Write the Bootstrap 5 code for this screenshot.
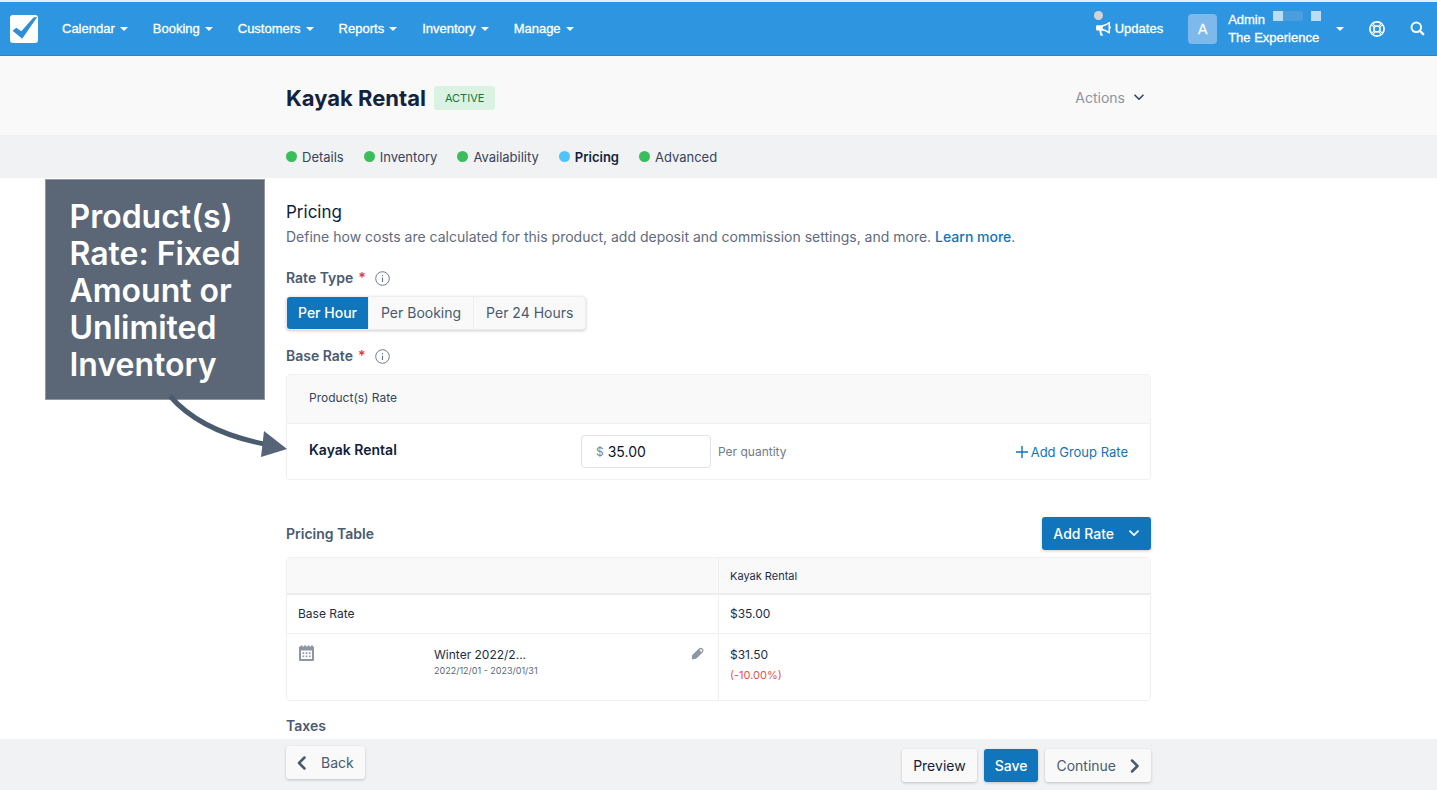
<!DOCTYPE html>
<html lang="en">
<head>
<meta charset="utf-8">
<meta name="viewport" content="width=device-width, initial-scale=1">
<title>Kayak Rental – Pricing</title>
<link href="https://cdn.jsdelivr.net/npm/bootstrap@5.3.0/dist/css/bootstrap.min.css" rel="stylesheet">
<style>
  :root { --ink:#0f1f3d; --slate:#4a5a70; --line:#eff0f2; --brand:#1175bb; --bar:#2e96e0; --pale:#f9f9f9; --mist:#f1f2f4; }
  body { font-family: Inter, "Liberation Sans", sans-serif; font-size: 14px; line-height: 20px; color: var(--ink); background: #fff; }
  a { text-decoration: none; }
  button { font-family: inherit; }
  svg { display: block; flex: none; }
  .wrap { width: 100%; max-width: 865px; margin-inline: auto; }

  .topbar { background: var(--bar); border-top: 2px solid #e4eef6; border-bottom: 1px solid #2785c9; height: 56px; padding: 0 12px 0 10px; font-family: "Liberation Sans", Arial, sans-serif; font-size: 13px; -webkit-text-stroke: .3px #fff; }
  .topbar a, .topbar button { color: #fff; }
  .topbar .menu { gap: 25px; margin-left: 24px; }
  .menu button { gap: 5px; }
  .plain { background: none; border: 0; padding: 0; }
  .tri { display: inline-block; border: 4px solid transparent; border-top-color: #fff; border-bottom: 0; }
  .updates { position: relative; gap: 4px; margin-right: 25px; }
  .dot-note { position: absolute; left: -2px; top: -8px; width: 9px; height: 9px; border-radius: 50%; background: #d3d3d6; }
  .avatar { width: 29px; height: 30px; border-radius: 4px; background: #7db9ea; font-size: 14px; }
  .account { gap: 11px; line-height: 18px; text-align: left; }
  .tool { margin-left: 25px; }
  .px { width: 10px; height: 10px; background: #bcdcf4; }
  .px.mid { width: 20px; background: #4b9edd; }

  .head { background: #f9f9f9; height: 79px; padding-top: 4px; }
  .head h1 { font-size: 22px; line-height: 28px; font-weight: 700; margin: 0; color: #13233f; }
  .tag { background: #daf2e1; color: #18763a; font-size: 11px; line-height: 24px; padding: 0 11px; border-radius: 3px; }
  .actions { color: #8b94a3; padding-right: 7px; gap: 9px; }
  .steps { background: var(--mist); height: 43px; font-size: 13px; }
  .steps ul { gap: 20px; }
  .steps a { color: #35445c; gap: 5px; }
  .steps a.now { color: var(--ink); font-weight: 600; }
  .bead { width: 11px; height: 11px; border-radius: 50%; background: #3bbd5b; }
  .now .bead { background: #4fc3fb; }

  .sheet { position: relative; padding-top: 22px; }
  h2 { font-size: 17px; line-height: 24px; font-weight: 400; margin: 0 0 3px; }
  .intro { color: #5f6b7c; margin: 0 0 21px; line-height: 20px; }
  .intro a { color: var(--brand); font-weight: 500; }
  .label-row { font-weight: 600; color: var(--slate); gap: 5px; line-height: 20px; }
  .label-row b { color: #e53935; font-weight: 600; }
  .label-row svg { margin-left: 4px; }
  .seg { margin: 8px 0 16px; height: 34px; border: 1px solid #ededef; border-radius: 4px; background: var(--pale); box-shadow: 0 1px 3px #0003; overflow: hidden; }
  .seg label { padding: 0 12px; color: var(--slate); cursor: pointer; border-left: 1px solid #ededef; line-height: 32px; }
  .seg input:checked + label { background: var(--brand); color: #fff; font-weight: 500; padding: 0 11px; border: 0; }

  .panel { border: 1px solid var(--line); border-radius: 4px; margin-top: 8px; margin-bottom: 37px; }
  .panel-head { background: var(--pale); border-bottom: 1px solid var(--line); height: 49px; padding: 0 22px; line-height: 46px; font-size: 12px; color: #35445c; }
  .panel-body { height: 55px; padding: 0 22px; }
  .product { flex: 0 0 272px; font-weight: 600; padding-bottom: 4px; }
  .money { width: 130px; height: 33px; border: 1px solid #dfe1e4; border-radius: 4px; padding: 0 14px; gap: 4px; margin-right: 7px; }
  .money span { font-size: 12px; color: #7b8593; }
  .money input { border: 0; outline: 0; padding: 0; width: 80px; color: #0b1428; background: none; }
  .hint { font-size: 12px; color: #6f7a89; }
  .add-group { color: var(--brand); font-size: 13px; gap: 3px; }

  .act { height: 33px; border-radius: 3px; border: 0; background: var(--pale); color: var(--slate); padding: 0 11px; box-shadow: 0 1px 3px #0003; font-size: 14px; white-space: nowrap; gap: 10px; }
  .act.main { background: var(--brand); color: #fff; font-weight: 500; gap: 14px; }
  .act.dark { color: var(--ink); }
  h3 { font-size: 14px; line-height: 20px; font-weight: 600; color: var(--slate); margin: 0; }
  .rates { border: 1px solid var(--line); border-radius: 4px; margin: 7px 0 15px; }
  .rates table { width: 100%; table-layout: fixed; font-size: 12px; color: #1e2d48; }
  .rates th, .rates td { padding: 0 11px; font-weight: 400; }
  .rates tr > :last-child { border-left: 1px solid var(--line); }
  .rates thead th { background: var(--pale); height: 36px; font-size: 11px; border-bottom: 2px solid #ecedf0; }
  .rates tbody tr:first-child > * { height: 39px; border-bottom: 1px solid var(--line); }
  .rates tbody tr:last-child > * { height: 67px; vertical-align: top; padding-top: 11px; }
  .season { width: 106px; margin-left: 119px; line-height: 20px; }
  .season small { display: block; font-size: 9px; line-height: 12px; color: #5b677a; white-space: nowrap; }
  .pencil { margin-right: 3px; padding-top: 2px; }
  .off { color: #e2574f; font-size: 11px; }

  .dock { background: var(--mist); height: 51px; bottom: 0; z-index: 5; }
  .dock .wrap { padding-top: 7px; }
  .dock .btn-set { gap: 7px; padding-top: 3px; }

  .callout { position: absolute; left: calc(50% - 674px); top: 1px; width: 220px; height: 221px; background: #5b6777; border: 1px solid #8f98a4; padding: 18px 0 0 24px; font-size: 32px; line-height: 37px; font-weight: 600; color: #fff; white-space: nowrap; }
  .arrow { position: absolute; left: 120px; top: 212px; }
</style>
</head>
<body class="d-flex flex-column min-vh-100">
<header class="topbar d-flex align-items-center">
  <a href="#" aria-label="Home"><svg width="28" height="28" viewBox="0 0 28 28"><rect width="28" height="28" rx="3" fill="#fff"/><path d="M2.600 15.800 6.300 12.800 11.300 16.300 23.500 2.500 27.200 2 12.200 23.800Z" fill="#2e8fd8"/></svg></a>
  <nav class="menu d-flex align-items-center">
    <button class="plain d-flex align-items-center">Calendar <i class="tri"></i></button>
    <button class="plain d-flex align-items-center">Booking <i class="tri"></i></button>
    <button class="plain d-flex align-items-center">Customers <i class="tri"></i></button>
    <button class="plain d-flex align-items-center">Reports <i class="tri"></i></button>
    <button class="plain d-flex align-items-center">Inventory <i class="tri"></i></button>
    <button class="plain d-flex align-items-center">Manage <i class="tri"></i></button>
  </nav>
  <a href="#" class="updates d-flex align-items-center ms-auto"><i class="dot-note"></i>
    <svg width="15" height="14" viewBox="0 0 15 14"><path fill="#fff" fill-rule="evenodd" d="M13 0h1v4.2q1 .3 1 1.3t-1 1.3V11.500h-1Q9.800 8.900 6 8.500q-1 .6-.3 1.700-.4 1 .6 1.600.3.800 1 1.100-.8 1-2.400.9-1-.3-1.500-5.300H1.300Q0 8.500 0 7.200V4.500Q0 3.200 1.300 3.200H5.500Q9.300 3.200 13 0ZM12.500 2Q9.800 4.200 6.800 4.600V7.100Q9.800 7.500 12.500 9.600Z"/></svg>
    Updates</a>
  <button class="account plain d-flex align-items-center">
    <span class="avatar d-flex align-items-center justify-content-center">A</span>
    <span><span class="d-flex"><span class="me-1">Admin</span><i class="px ms-1"></i><i class="px mid me-2"></i><i class="px"></i></span><span class="d-block">The Experience</span></span>
    <i class="tri ms-1"></i>
  </button>
  <button class="plain tool" aria-label="Help"><svg width="16" height="16" viewBox="0 0 16 16" fill="none" stroke="#fff"><circle cx="8" cy="8" r="7.100" stroke-width="1.700"/><circle cx="8" cy="8" r="3.100" stroke-width="1.500"/><path stroke-width="2.600" d="M3.200 3.200 5.600 5.600M12.800 3.200 10.400 5.600M3.200 12.800 5.600 10.400M12.800 12.800 10.400 10.400"/><path stroke="#2e96e0" stroke-width=".7" d="M3 3 5.400 5.400M13 3 10.600 5.400M3 13 5.400 10.600M13 13 10.600 10.600"/></svg></button>
  <button class="plain tool" aria-label="Search"><svg width="15" height="15" viewBox="0 0 15 15" fill="none" stroke="#fff" stroke-width="2"><circle cx="6.300" cy="6.300" r="4.800"/><path stroke-linecap="round" stroke-width="2.400" d="m10 10 3.200 3.200"/></svg></button>
</header>

<section class="head d-flex align-items-center">
  <div class="wrap d-flex align-items-center">
    <h1>Kayak Rental</h1><span class="tag ms-2">ACTIVE</span>
    <button class="actions plain d-flex align-items-center ms-auto">Actions <svg width="10" height="7" viewBox="0 0 10 7" fill="none" stroke="#35445c" stroke-width="1.600" stroke-linecap="round" stroke-linejoin="round"><path d="m1 1.200 4 4 4-4"/></svg></button>
  </div>
</section>
<nav class="steps d-flex align-items-center">
  <div class="wrap"><ul class="list-unstyled d-flex m-0">
    <li><a href="#" class="d-flex align-items-center"><i class="bead"></i>Details</a></li>
    <li><a href="#" class="d-flex align-items-center"><i class="bead"></i>Inventory</a></li>
    <li><a href="#" class="d-flex align-items-center"><i class="bead"></i>Availability</a></li>
    <li><a href="#" class="now d-flex align-items-center"><i class="bead"></i>Pricing</a></li>
    <li><a href="#" class="d-flex align-items-center"><i class="bead"></i>Advanced</a></li>
  </ul></div>
</nav>

<main class="sheet">
  <div class="wrap">
    <h2>Pricing</h2>
    <p class="intro">Define how costs are calculated for this product, add deposit and commission settings, and more. <a href="#">Learn more</a>.</p>

    <div class="label-row d-flex align-items-center">Rate Type <b>*</b> <svg width="15" height="15" viewBox="0 0 15 15" fill="none" stroke="#707b8a"><circle cx="7.500" cy="7.500" r="6.800"/><path stroke-width="1.200" d="M7.500 6.600v4.400M7.500 4v1.300"/></svg></div>
    <div class="seg d-inline-flex" role="group" aria-label="Rate type">
      <input class="visually-hidden" type="radio" name="rate" id="hour" checked><label for="hour">Per Hour</label>
      <input class="visually-hidden" type="radio" name="rate" id="booking"><label for="booking">Per Booking</label>
      <input class="visually-hidden" type="radio" name="rate" id="day"><label for="day">Per 24 Hours</label>
    </div>

    <label class="label-row d-flex align-items-center" for="amount">Base Rate <b>*</b> <svg width="15" height="15" viewBox="0 0 15 15" fill="none" stroke="#707b8a"><circle cx="7.500" cy="7.500" r="6.800"/><path stroke-width="1.200" d="M7.500 6.600v4.400M7.500 4v1.300"/></svg></label>
    <div class="panel">
      <div class="panel-head">Product(s) Rate</div>
      <div class="panel-body d-flex align-items-center">
        <span class="product">Kayak Rental</span>
        <span class="money d-flex align-items-center"><span>$</span><input id="amount" type="text" value="35.00"></span>
        <span class="hint">Per quantity</span>
        <a href="#" class="add-group d-flex align-items-center ms-auto"><svg width="12" height="12" viewBox="0 0 12 12" stroke="#1175bb" stroke-width="1.400"><path d="M6 0v12M0 6h12"/></svg>Add Group Rate</a>
      </div>
    </div>

    <div class="d-flex align-items-center justify-content-between">
      <h3>Pricing Table</h3>
      <button class="act main d-flex align-items-center">Add Rate <svg width="12" height="7" viewBox="0 0 12 7" fill="none" stroke="#fff" stroke-width="1.700" stroke-linecap="round" stroke-linejoin="round"><path d="m2 1.200 4 4 4-4"/></svg></button>
    </div>
    <div class="rates">
      <table>
        <thead><tr><th></th><th>Kayak Rental</th></tr></thead>
        <tbody>
          <tr><td>Base Rate</td><td>$35.00</td></tr>
          <tr>
            <td><div class="d-flex">
              <svg width="17" height="17" viewBox="0 0 17 17"><path fill="#8d96a5" fill-rule="evenodd" d="M1 2.500q0-1 1-1h.5V.5h2v1h1.500V.5h2v1h1.500V.5h2v1H13V.5h2v1q1 0 1 1v12.500q0 1-1 1H2q-1 0-1-1ZM3 5.500v8.500h11V5.500Z"/><path fill="#8d96a5" d="M4.500 7.200h1.700v1.700H4.500zM7.700 7.200h1.700v1.700H7.700zM10.900 7.200h1.700v1.700h-1.700zM4.500 10.400h1.700v1.700H4.500zM7.700 10.400h1.700v1.700H7.700zM10.900 10.400h1.700v1.700h-1.700z"/></svg>
              <div class="season">Winter 2022/2...<small>2022/12/01 - 2023/01/31</small></div>
              <button class="plain pencil ms-auto align-self-start" aria-label="Edit rate"><svg width="13" height="13" viewBox="0 0 13 13"><path fill="#8d96a5" fill-rule="evenodd" d="M.8 12.400 1 8.800Q1.200 8 2 7.200L8 1.400Q9.800-.1 11.500 1.500T12 5L6 10.900Q4.800 12 3.800 12.100ZM9 2.600 8.500 3.200 10.400 5.100 11 4.500Q11.500 3.400 10.700 2.600T9 2.600Z"/></svg></button>
            </div></td>
            <td><div class="season m-0">$31.50<div class="off">(-10.00%)</div></div></td>
          </tr>
        </tbody>
      </table>
    </div>
    <h3>Taxes</h3>
  </div>
  <aside class="callout">Product(s)<br>Rate: Fixed<br>Amount or<br>Unlimited<br>Inventory
    <svg class="arrow" width="124" height="68" viewBox="0 0 124 68"><path d="M4 4Q34 39 98 52" fill="none" stroke="#4b5b6e" stroke-width="5"/><path d="M98 39 121 57 95 65Z" fill="#556476"/></svg>
  </aside>
</main>

<footer class="dock position-sticky mt-auto">
  <div class="wrap d-flex justify-content-between align-items-start">
    <button class="act d-flex align-items-center"><svg width="14" height="14" viewBox="0 0 14 14" fill="none" stroke="#4a5a70" stroke-width="2.500" stroke-linecap="round" stroke-linejoin="round"><path d="M7.500 1.500 2 7l5.500 5.500"/></svg>Back</button>
    <div class="btn-set d-flex">
      <button class="act dark">Preview</button>
      <button class="act main">Save</button>
      <button class="act d-flex align-items-center">Continue <svg width="14" height="14" viewBox="0 0 14 14" fill="none" stroke="#4a5a70" stroke-width="2.500" stroke-linecap="round" stroke-linejoin="round"><path d="M6 1.500 11.500 7 6 12.500"/></svg></button>
    </div>
  </div>
</footer>
<script src="https://cdn.jsdelivr.net/npm/bootstrap@5.3.0/dist/js/bootstrap.bundle.min.js"></script>
</body>
</html>
